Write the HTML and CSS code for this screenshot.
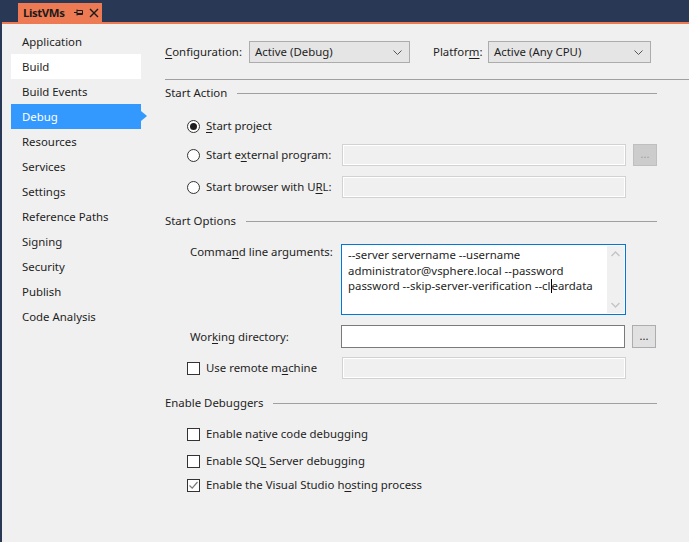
FILE: index.html
```html
<!DOCTYPE html>
<html>
<head>
<meta charset="utf-8">
<link rel="stylesheet" href="styles.css">
</head>
<body>
<div class="topbar">
  <div class="tab">
    <span class="tab-title">ListVMs</span>
    <svg class="pin" width="9" height="9" viewBox="0 0 9 9"><path d="M0 4.5H3M3 1.5V7.5M3 2.5H8.5V6.5H3M3 5.5H8.5" fill="none" stroke="#1b1b1b" stroke-width="1"/></svg>
    <svg class="close" width="10" height="10" viewBox="0 0 10 10"><path d="M1 1L9 9M9 1L1 9" stroke="#1b1b1b" stroke-width="1.4"/></svg>
  </div>
</div>
<div class="tabline"></div>
<div class="page">
  <nav class="sidebar">
    <div class="nav-item">Application</div>
    <div class="nav-item hover">Build</div>
    <div class="nav-item">Build Events</div>
    <div class="nav-item active">Debug</div>
    <div class="nav-item">Resources</div>
    <div class="nav-item">Services</div>
    <div class="nav-item">Settings</div>
    <div class="nav-item">Reference Paths</div>
    <div class="nav-item">Signing</div>
    <div class="nav-item">Security</div>
    <div class="nav-item">Publish</div>
    <div class="nav-item">Code Analysis</div>
  </nav>
  <main class="main">
    <div class="config-row">
      <span class="label"><u>C</u>onfiguration:</span>
      <div class="select cfg"><span>Active (Debug)</span><svg width="9" height="5" viewBox="0 0 9 5"><path d="M0.5 0.5L4.5 4.5L8.5 0.5" fill="none" stroke="#555" stroke-width="1"/></svg></div>
      <span class="label plat-label">Platfor<u>m</u>:</span>
      <div class="select plat"><span>Active (Any CPU)</span><svg width="9" height="5" viewBox="0 0 9 5"><path d="M0.5 0.5L4.5 4.5L8.5 0.5" fill="none" stroke="#555" stroke-width="1"/></svg></div>
    </div>
    <div class="full-rule"></div>

    <div class="section-head"><span>Start Action</span><div class="rule"></div></div>
    <div class="section">
      <div class="row r-project"><span class="radio checked"></span><span><u>S</u>tart project</span></div>
      <div class="row r-ext">
        <span class="radio"></span><span class="rlabel">Start e<u>x</u>ternal program:</span>
        <div class="textbox disabled"></div>
        <div class="btn disabled">...</div>
      </div>
      <div class="row r-url">
        <span class="radio"></span><span class="rlabel">Start browser with U<u>R</u>L:</span>
        <div class="textbox disabled"></div>
      </div>
    </div>

    <div class="section-head sh-options"><span>Start Options</span><div class="rule"></div></div>
    <div class="section start-options">
      <div class="row r-args">
        <span class="flabel">Comma<u>n</u>d line arguments:</span>
        <div class="textarea">
          <div class="ta-text">--server servername --username<br>administrator@vsphere.local --password<br>password --skip-server-verification --cl<span class="caret"></span>eardata</div>
          <div class="vscroll">
            <svg width="9" height="6" viewBox="0 0 9 6"><path d="M0.5 5L4.5 1L8.5 5" fill="none" stroke="#c4c4c4" stroke-width="1.4"/></svg>
            <svg width="9" height="6" viewBox="0 0 9 6"><path d="M0.5 1L4.5 5L8.5 1" fill="none" stroke="#c4c4c4" stroke-width="1.4"/></svg>
          </div>
        </div>
      </div>
      <div class="row r-wd">
        <span class="flabel">Wor<u>k</u>ing directory:</span>
        <div class="textbox active-box"></div>
        <div class="btn">...</div>
      </div>
      <div class="row r-remote">
        <span class="check"></span><span class="clabel">Use remote m<u>a</u>chine</span>
        <div class="textbox disabled"></div>
      </div>
    </div>

    <div class="section-head sh-debug"><span>Enable Debuggers</span><div class="rule"></div></div>
    <div class="section">
      <div class="row r-native"><span class="check"></span><span>Enable na<u>t</u>ive code debugging</span></div>
      <div class="row r-sql"><span class="check"></span><span>Enable SQ<u>L</u> Server debugging</span></div>
      <div class="row r-host"><span class="check checked"><svg width="11" height="11" viewBox="0 0 11 11"><path d="M1.5 5.5L4.2 8.2L9.5 2" fill="none" stroke="#7a7a7a" stroke-width="1.2"/></svg></span><span>Enable the Visual Studio h<u>o</u>sting process</span></div>
    </div>
  </main>
</div>
</body>
</html>
```
FILE: styles.css
```css
* { box-sizing: border-box; }
html, body { margin: 0; padding: 0; }
body {
  background: #293955;
  font-family: "Noto Sans", "Open Sans", sans-serif;
  font-size: 11.4px;
  line-height: 16px;
  color: #1e1e1e;
  width: 689px;
  height: 542px;
  overflow: hidden;
}
u { text-decoration: underline; text-underline-offset: 2px; }

.topbar {
  height: 22px;
  padding-left: 18px;
  padding-top: 3px;
}
.tab {
  width: 84px;
  height: 19px;
  background: #ed7a53;
  display: flex;
  align-items: center;
  padding-left: 5px;
}
.tab-title { font-weight: bold; color: #1b1b1b; font-size: 11.4px; letter-spacing: -0.4px; width: 46px; }
.pin { margin-left: 5px; }
.close { margin-left: 6px; }
.tabline {
  height: 2px;
  margin-left: 2px;
  background: #ed7a53;
}
.page {
  margin-left: 2px;
  background: #f0f0f0;
  height: 518px;
  display: flex;
}
.sidebar {
  width: 163px;
  padding-top: 5px;
  padding-left: 9px;
  flex: none;
}
.nav-item {
  width: 130px;
  height: 25px;
  line-height: 25px;
  padding-left: 11px;
  position: relative;
  color: #1e1e1e;
}
.nav-item.hover { background: #ffffff; }
.nav-item.active { background: #3399ff; color: #ffffff; }
.nav-item.active::after {
  content: "";
  position: absolute;
  right: -6px;
  top: 7px;
  border-left: 6px solid #3399ff;
  border-top: 5.5px solid transparent;
  border-bottom: 5.5px solid transparent;
}
.main {
  flex: 1;
  padding-top: 17px;
}
.config-row {
  display: flex;
  align-items: center;
  height: 22px;
}
.label { width: 84px; }
.plat-label { width: 55px; margin-left: 23px; }
.select {
  height: 22px;
  background: #e5e5e5;
  border: 1px solid #acacac;
  display: flex;
  align-items: center;
  justify-content: space-between;
  padding: 0 7px 0 5px;
}
.select.cfg { width: 161px; }
.select.plat { width: 163px; }
.full-rule {
  margin-top: 16px;
  height: 1px;
  background: #a0a0a0;
}
.section-head {
  display: flex;
  align-items: center;
  margin-top: 5px;
  width: 492px;
  height: 16px;
}
.section-head .rule { flex: 1; height: 1px; background: #a0a0a0; margin-left: 10px; margin-top: 1px; }
.row { display: flex; align-items: center; }
.section { padding-left: 22px; }

.radio {
  width: 13px; height: 13px;
  border: 1px solid #333;
  border-radius: 50%;
  background: #fff;
  margin-right: 6px;
  flex: none;
  display: flex; align-items: center; justify-content: center;
}
.radio.checked::after {
  content: ""; width: 7px; height: 7px; border-radius: 50%; background: #1e1e1e;
}
.r-project { margin-top: 16px; height: 18px; }
.r-ext { margin-top: 9px; height: 22px; }
.r-url { margin-top: 10px; height: 22px; }
.rlabel { width: 136px; }
.textbox {
  width: 284px;
  height: 23px;
  background: #ffffff;
  border: 1px solid #7a7a7a;
}
.textbox.disabled {
  background: #f0f0f0;
  border: 1px solid #d2d2d2;
  box-shadow: inset 0 0 0 1px #ffffff;
  height: 22px;
}
.btn {
  width: 24px;
  height: 23px;
  margin-left: 7px;
  background: #e1e1e1;
  border: 1px solid #adadad;
  display: flex; align-items: center; justify-content: center;
  font-size: 11px;
  padding-bottom: 2px;
}
.btn.disabled { background: #cccccc; border-color: #bfbfbf; color: #a0a0a0; height: 22px; }

.sh-options { margin-top: 15px; }
.sh-debug { margin-top: 16px; }
.start-options { padding-left: 25px; }
.r-args { margin-top: 15px; align-items: flex-start; }
.flabel { width: 151px; }
.r-args .flabel { margin-top: 0px; }
.textarea {
  width: 285px;
  height: 71px;
  background: #fff;
  border: 1px solid #0078d7;
  display: flex;
  justify-content: space-between;
}
.ta-text { padding: 2px 0 0 6px; line-height: 15.5px; white-space: nowrap; }
.caret { display: inline-block; width: 1px; height: 14px; background: #000; vertical-align: -3px; }
.vscroll {
  width: 17px;
  margin: 1px 1px 1px 0;
  background: #f0f0f0;
  display: flex; flex-direction: column; justify-content: space-between; align-items: center;
  padding: 5px 0 5px;
}
.r-wd { margin-top: 10px; height: 23px; }
.r-wd .textbox { height: 23px; }
.r-wd .btn { height: 23px; }
.r-remote { margin-top: 9px; height: 22px; margin-left: -3px; }
.clabel { width: 136px; }
.check {
  width: 13px; height: 13px;
  border: 1px solid #333;
  background: #fff;
  margin-right: 6px;
  flex: none;
  display: flex; align-items: center; justify-content: center;
}
.r-native { margin-top: 13px; height: 20px; }
.r-sql { margin-top: 7px; height: 20px; }
.r-host { margin-top: 4px; height: 20px; }
```
